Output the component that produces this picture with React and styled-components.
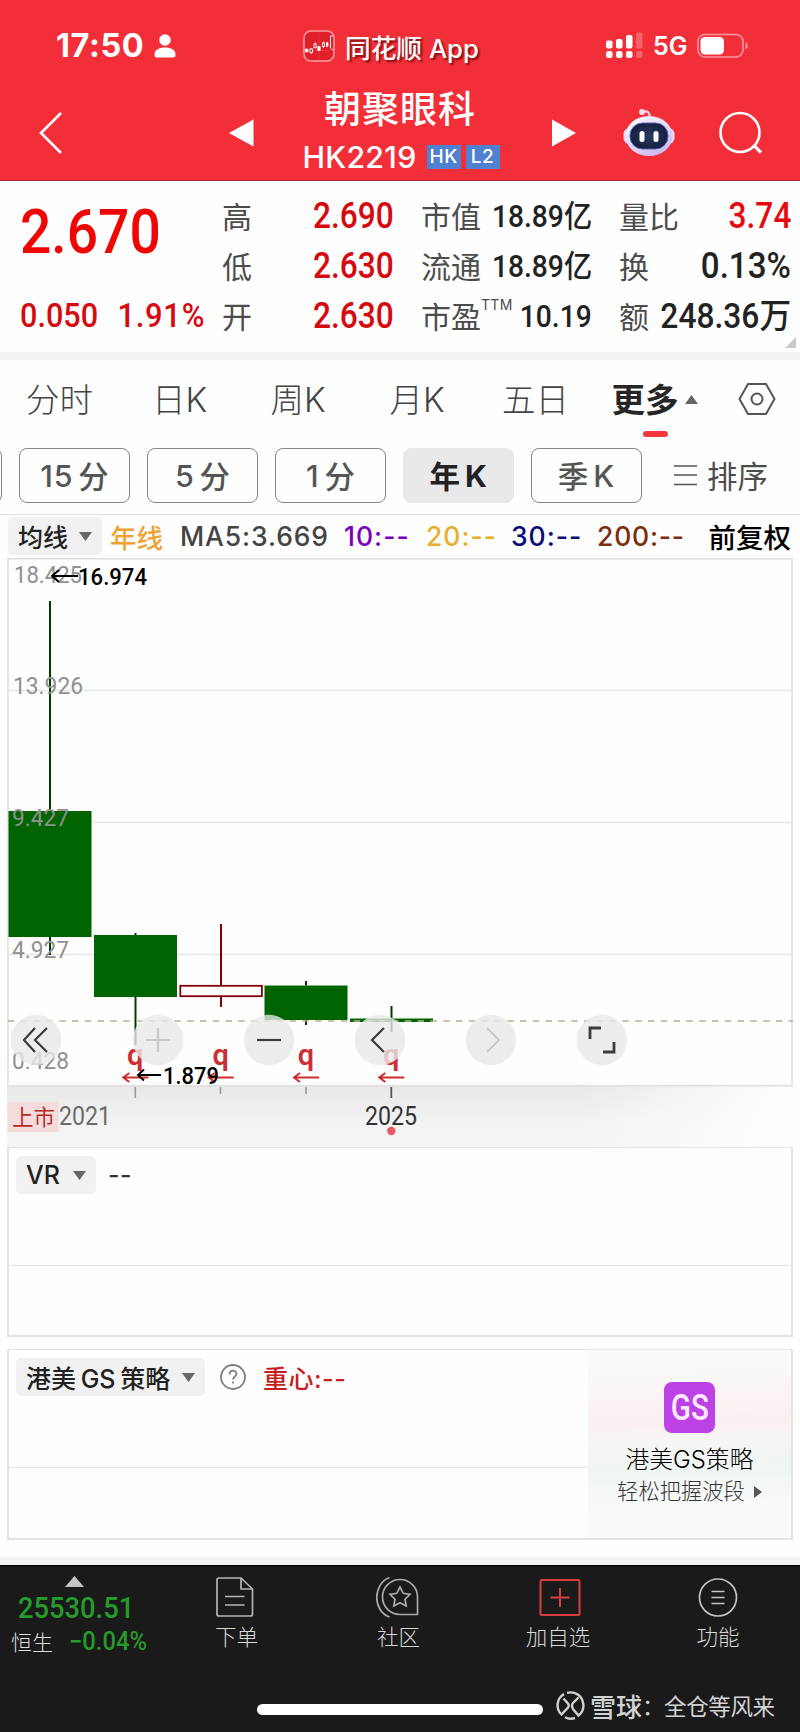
import React from "react";
import { styled, createGlobalStyle } from "styled-components";

const GlobalStyle = createGlobalStyle`
  * {
    box-sizing: border-box;
  }
  body {
    margin: 0;
    background: #fefefe;
    font-family: Inter, "Noto Sans CJK SC", sans-serif;
    color: #222;
    white-space: nowrap;
  }
  svg {
    display: block;
    flex: none;
  }
`;

const Page = styled.div`
  width: 800px;
  height: 1732px;
  overflow: hidden;
  display: flex;
  flex-direction: column;
`;

/* condensed figures used for all prices */
const Num = styled.span`
  display: inline-block;
  font-family: Roboto, "Noto Sans CJK SC", sans-serif;
  font-size: ${(p) => p.$size}px;
  font-weight: ${(p) => p.$weight || 500};
  color: ${(p) => p.$color || "#222"};
  line-height: 1;
  letter-spacing: ${(p) => p.$gap || 0}px;
  transform: scaleX(${(p) => p.$fit || 0.88});
  transform-origin: ${(p) => p.$from || "right"} center;
`;

const Header = styled.header`
  height: 181px;
  flex: none;
  background: #f22f39;
  border-bottom: 1px solid #b3202c;
  color: #fff;
`;

const StatusBar = styled.div`
  height: 92px;
  display: flex;
  align-items: center;
  padding-left: 56px;
`;

const Clock = styled.div`
  width: 98px;
  margin-top: -1px;
  font-size: 32.5px;
  font-weight: 700;
  letter-spacing: 0.6px;
`;

const AppName = styled.div`
  display: flex;
  align-items: center;
  width: 303px;
  margin-left: 127px;
  gap: 10px;
  font-size: 25.7px;
  font-weight: 500;
  text-shadow: 2px 2px 2px rgba(80, 0, 0, 0.7);
`;

const Network = styled.div`
  width: 44px;
  margin-left: 9px;
  font-size: 25px;
  font-weight: 600;
`;

const TitleBar = styled.div`
  height: 88px;
  display: grid;
  grid-template-columns: 229px 26px 296px 26px 46px 52px 43px 44px;
  align-items: center;

  > svg {
    margin-top: -7px;
  }
`;

const StockTitle = styled.div`
  margin-left: -6px;
  margin-top: -1px;
  text-align: center;
`;

const StockName = styled.div`
  font-size: 37px;
  font-weight: 500;
  line-height: 38px;
  letter-spacing: 1px;
  padding-bottom: 5px;
`;

const StockCode = styled.div`
  display: flex;
  justify-content: center;
  align-items: center;
  gap: 5px;
  height: 46px;
  margin-left: 2px;
  font-size: 30.3px;
  font-weight: 500;

  span {
    margin-right: 5px;
    letter-spacing: 0.3px;
  }
`;

const Badge = styled.b`
  width: 34px;
  height: 24px;
  background: #5080d0;
  font-size: 19px;
  font-weight: 500;
  line-height: 24px;
  letter-spacing: 0.5px;
`;

const Quotes = styled.section`
  height: 171px;
  flex: none;
  display: grid;
  grid-template-columns: 175px 172px 171px 172px;
  column-gap: 27px;
  padding: 11px 9px 0 20px;
  position: relative;
`;

const Price = styled.div`
  display: flex;
  flex-direction: column;
  height: 150px;
`;

const Big = styled.div`
  height: 100px;
  padding-top: 9px;
`;

const Change = styled.div`
  height: 50px;
  display: flex;
  align-items: center;
  gap: 2px;
  padding-bottom: 5px;
`;

const QuoteRow = styled.div`
  height: 50px;
  display: flex;
  justify-content: space-between;
  align-items: center;
  font-size: 30px;
  color: #4c4c4c;
  line-height: 46px;

  > ${Num} {
    margin-left: -34px;
    margin-top: -2px;
  }
  sup {
    font-size: 14px;
    line-height: 1;
    vertical-align: 18px;
    letter-spacing: 0.3px;
  }
`;

const Corner = styled.svg`
  position: absolute;
  right: 4px;
  bottom: 4px;
`;

const Band = styled.div`
  height: 8px;
  flex: none;
  background: #f3f3f3;
`;

const Tabs = styled.nav`
  height: 88px;
  flex: none;
  display: grid;
  grid-template-columns: 119px 121px 116px 122px 115px 123px 82px;
`;

const Tab = styled.div`
  height: 80px;
  display: flex;
  justify-content: center;
  align-items: center;
  gap: 6px;
  padding-bottom: 5px;
  font-size: 33.5px;
  font-weight: ${(p) => (p.$active ? 600 : 300)};
  color: ${(p) => (p.$active ? "#262626" : "#444")};
  position: relative;

  > svg {
    margin-top: 3px;
  }
  &::after {
    content: "";
    display: ${(p) => (p.$active ? "block" : "none")};
    position: absolute;
    left: 50px;
    bottom: 3px;
    width: 25px;
    height: 6px;
    border-radius: 3px;
    background: #f3363a;
  }
`;

const Chips = styled.div`
  height: 67px;
  flex: none;
  display: flex;
  gap: 17px;
  margin-left: -109px;
  border-bottom: 1px solid #e3e3e3;
`;

const Chip = styled.div`
  width: 111px;
  height: 55px;
  flex: none;
  display: flex;
  align-items: center;
  justify-content: center;
  gap: 5px;
  padding-bottom: 1px;
  border: 1px solid ${(p) => (p.$active ? "#e9e9e9" : "#858585")};
  border-radius: 8px;
  background: ${(p) => (p.$active ? "#e9e9e9" : "#fefefe")};
  color: ${(p) => (p.$active ? "#222" : "#555")};
  font-size: 30.5px;
  font-weight: ${(p) => (p.$active ? 700 : 500)};

  span {
    letter-spacing: 0.8px;
  }
`;

const Sort = styled.div`
  height: 55px;
  display: flex;
  align-items: center;
  gap: 10px;
  margin-left: 15px;
  padding-bottom: 2px;
  font-size: 30.5px;
  color: #4c4c4c;
`;

const Averages = styled.div`
  height: 43px;
  flex: none;
  display: flex;
  align-items: center;
  padding: 0 9px 1px 8px;
`;

const Select = styled.div`
  display: flex;
  align-items: center;
  justify-content: space-between;
  width: ${(p) => p.$width}px;
  height: 38px;
  padding: 0 10px 0 10px;
  border-radius: 5px;
  background: #f1f1f1;
  font-size: 25px;
  font-weight: 500;
  word-spacing: -2px;
  color: #222;
`;

const AverageList = styled.div`
  display: flex;
  align-items: center;
  margin-left: 8px;
`;

const Average = styled.div`
  width: ${(p) => p.$width}px;
  color: ${(p) => p.$color};
  font-size: 26.5px;
  font-weight: 500;
  letter-spacing: ${(p) => p.$gap || 0}px;
`;

const Adjust = styled.div`
  margin-left: auto;
  font-size: 27.5px;
  color: #000;
  font-weight: 500;
`;

const Chart = styled.svg`
  font-family: Roboto, "Noto Sans CJK SC", sans-serif;
`;

const Panel = styled.section`
  height: ${(p) => p.$height}px;
  flex: none;
  margin: 0 7px ${(p) => p.$below}px 7px;
  border: 2px solid #e4e4e4;
  border-top-width: 1px;
  display: flex;
`;

const PanelBody = styled.div`
  flex: 1;
`;

const PanelTop = styled.div`
  height: 118px;
  border-bottom: 1px solid #e4e4e4;
  display: flex;
  align-items: flex-start;
  padding: 8px 7px;
`;

const PanelValue = styled.div`
  height: 38px;
  display: flex;
  align-items: center;
  margin-left: ${(p) => p.$left}px;
  font-size: 25px;
  font-weight: 500;
  color: ${(p) => p.$color};
  letter-spacing: 0.5px;
`;

const Promo = styled.div`
  width: 203px;
  display: flex;
  flex-direction: column;
  align-items: center;
  padding-top: 32px;
  background: linear-gradient(178deg, #fafafa 8%, #fbeff0 39%, #f8f4f4 46%, #eff5f3 62%, #fafafa 84%);
`;

const PromoLogo = styled.div`
  width: 51px;
  height: 51px;
  border-radius: 8px;
  background: #bd42e5;
  display: flex;
  align-items: center;
  justify-content: center;
`;

const PromoTitle = styled.div`
  margin-top: 10px;
  font-size: 23.8px;
  font-weight: 300;
  line-height: 34px;
  color: #000;
`;

const PromoText = styled.div`
  display: flex;
  align-items: center;
  gap: 9px;
  font-size: 21.3px;
  font-weight: 300;
  line-height: 29px;
  color: #333;
`;

const Bottom = styled.footer`
  height: 167px;
  flex: none;
  background: #1a1a1a;
  border-top: 1px solid #000;
`;

const Nav = styled.div`
  height: 122px;
  display: grid;
  grid-template-columns: 156px 161px 163px 156px 164px;
`;

const Index = styled.div`
  padding: 10px 0 0 11px;

  > svg {
    margin-left: 54px;
  }
`;

const IndexRow = styled.div`
  display: flex;
  align-items: center;
  gap: 16px;
  height: ${(p) => p.$height}px;
  padding-left: ${(p) => p.$left || 0}px;
  font-size: 21px;
  font-weight: 300;
  color: #ddd;
`;

const NavItem = styled.div`
  display: flex;
  flex-direction: column;
  align-items: center;
  gap: 3px;
  padding-top: 10px;
  font-size: 21.5px;
  font-weight: 300;
  line-height: 33px;
  color: #d8d8d8;
`;

const HomeRow = styled.div`
  display: flex;
  align-items: center;
  height: 34px;
  padding-left: 257px;
`;

const HomeBar = styled.div`
  width: 286px;
  height: 11px;
  border-radius: 6px;
  background: #fff;
  margin-top: 8px;
`;

const Watermark = styled.div`
  display: flex;
  align-items: center;
  margin-left: 13px;
  color: #d2d2d2;
  font-size: 22.5px;
  letter-spacing: -0.4px;

  b {
    font-size: 26px;
    font-weight: 500;
    margin-left: 5px;
    letter-spacing: 0;
  }
`;

const Caret = ({ up, w = 13, h = 9, color = "#666" }) => (
  <svg width={w} height={h} viewBox="0 0 13 9" preserveAspectRatio="none">
    <path d={up ? "M0 9L6.5 0L13 9Z" : "M0 0H13L6.5 9Z"} fill={color} />
  </svg>
);

const quotes = [
  [
    { label: "高", value: "2.690", color: "#d5090f" },
    { label: "低", value: "2.630", color: "#d5090f" },
    { label: "开", value: "2.630", color: "#d5090f" },
  ],
  [
    { label: "市值", value: "18.89亿", size: 31, fit: 0.91 },
    { label: "流通", value: "18.89亿", size: 31, fit: 0.91 },
    { label: "市盈", sup: "TTM", value: "10.19", size: 32 },
  ],
  [
    { label: "量比", value: "3.74", color: "#e50a10" },
    { label: "换", value: "0.13%", fit: 0.92 },
    { label: "额", value: "248.36万", size: 34.5, fit: 0.92 },
  ],
];

const averages = [
  { text: "年线", width: 70, color: "#eda233" },
  { text: "MA5:3.669", width: 164, color: "#444", gap: 0.9 },
  { text: "10:--", width: 82, color: "#7a00c0", gap: 1 },
  { text: "20:--", width: 85, color: "#e9ae2b", gap: 1 },
  { text: "30:--", width: 86, color: "#0a0a78", gap: 1 },
  { text: "200:--", width: 100, color: "#7b2d0c", gap: 0.8 },
];

const prices = [
  { text: "18.425", x: 14, y: 583, w: 68 },
  { text: "13.926", x: 13, y: 694, w: 70 },
  { text: "9.427", x: 12, y: 826, w: 57 },
  { text: "4.927", x: 12, y: 958, w: 57 },
  { text: "0.428", x: 12, y: 1069, w: 57 },
];

const candles = [
  { x: 8.5, top: 811, bottom: 937, high: 601, low: 955 },
  { x: 94, top: 935, bottom: 997, high: 933, low: 1045 },
  { x: 179.5, top: 985, bottom: 997, high: 924, low: 1007, rise: true },
  { x: 264.5, top: 985.5, bottom: 1020, high: 981, low: 1025 },
  { x: 350, top: 1018.5, bottom: 1022, high: 1006, low: 1032 },
];

const controls = [
  { x: 36, d: "M-1 -12L-12 0L-1 12M11 -12L-1 0L11 12" },
  { x: 158, d: "M-12 0H12M0 -12V12", off: true },
  { x: 269, d: "M-12 0H12" },
  { x: 380, d: "M4 -12L-8 0L4 12" },
  { x: 491, d: "M-4 -12L8 0L-4 12", off: true },
  { x: 602, d: "M-12 -1V-12H-1M12 2V12H1", thick: true },
];

const KLine = () => (
  <Chart width="800" height="589" viewBox="0 558 800 589">
    <defs>
      <linearGradient id="axisShade" x1="0" y1="0" x2="0" y2="1">
        <stop offset="0" stopColor="#e8e8e8" />
        <stop offset="0.6" stopColor="#f3f3f3" />
        <stop offset="1" stopColor="#f4f4f4" />
      </linearGradient>
      <linearGradient id="axisFade">
        <stop offset="0.45" stopColor="#fefefe" stopOpacity="0" />
        <stop offset="0.97" stopColor="#fefefe" />
      </linearGradient>
    </defs>
    <rect x="7" y="1086" width="786" height="61" fill="url(#axisShade)" />
    <rect x="400" y="1086" width="393" height="61" fill="url(#axisFade)" />
    <path d="M8 690.5H792M8 822.5H792M8 954.5H792" stroke="#e5e5e5" strokeWidth="1.3" />
    <rect x="8" y="558.8" width="784" height="527" fill="none" stroke="#e0e0e0" strokeWidth="1.6" />
    {candles.map((c) => {
      const color = c.rise ? "#820008" : "#006500";
      return (
        <g key={c.x}>
          <path
            d={`M${c.x + 41.5} ${c.high}V${c.top}M${c.x + 41.5} ${c.bottom}V${c.low}`}
            stroke={c.rise ? color : "#003c00"}
            strokeWidth="2"
          />
          <rect
            x={c.rise ? c.x + 0.8 : c.x}
            y={c.rise ? c.top + 0.8 : c.top}
            width={c.rise ? 81.6 : 83}
            height={c.bottom - c.top - (c.rise ? 1.6 : 0)}
            fill={c.rise ? "#fefefe" : color}
            stroke={c.rise ? color : "none"}
            strokeWidth="1.8"
          />
        </g>
      );
    })}
    <path d="M8 1021H793" stroke="#b9ae93" strokeWidth="1.4" strokeDasharray="6.4 6.4" />
    {prices.map((p) => (
      <text key={p.text} x={p.x} y={p.y} textLength={p.w} lengthAdjust="spacingAndGlyphs" fontSize="24" fill="#909090">
        {p.text}
      </text>
    ))}
    {[135.3, 220.7, 306, 391.3].map((x) => (
      <g key={x}>
        <text x={x} y="1065" textAnchor="middle" fontSize="29" fontWeight="600" fill="#cd3034">
          q
        </text>
        <path d={`M${x + 13} 1077.5H${x - 12}M${x - 6} 1073L${x - 12} 1077.5L${x - 6} 1082`} stroke="#cd2c30" strokeWidth="2" fill="none" />
      </g>
    ))}
    {controls.map((b) => (
      <g key={b.x} transform={`translate(${b.x} 1040)`}>
        <circle r="25.3" fill="#e9e9e9" fillOpacity="0.8" />
        <path d={b.d} fill="none" stroke={b.off ? "#c9c9c9" : "#3b3b3b"} strokeWidth={b.thick ? 2.8 : 2.2} />
      </g>
    ))}
    <g fill="none" stroke="#000" strokeWidth="2">
      <path d="M78 576H52M59 570L52 576L59 582" />
      <path d="M161 1075H138M144 1069.5L138 1075L144 1080.5" />
    </g>
    <g fontSize="24.5" fontWeight="500" fill="#000">
      <text x="78" y="585" textLength="69" lengthAdjust="spacingAndGlyphs">16.974</text>
      <text x="163" y="1084" textLength="56" lengthAdjust="spacingAndGlyphs">1.879</text>
    </g>
    <path d="M135.3 1087V1098M220.5 1087V1094M306 1087V1094" stroke="#999" strokeWidth="1.6" />
    <path d="M391.3 1087V1098" stroke="#555" strokeWidth="1.8" />
    <rect x="7.5" y="1102" width="51" height="30" fill="#f5dcdc" />
    <text x="12" y="1125" fontSize="21.5" fill="#b72b2b">上市</text>
    <text x="59" y="1125" textLength="52" lengthAdjust="spacingAndGlyphs" fontSize="25" fill="#6c6c6c">2021</text>
    <text x="365" y="1125" textLength="52" lengthAdjust="spacingAndGlyphs" fontSize="25" fill="#333">2025</text>
    <circle cx="391.3" cy="1131" r="4.2" fill="#e45a60" />
  </Chart>
);

const AppLogo = () => (
  <svg width="32" height="32" viewBox="0 0 32 32">
    <rect x="1" y="1" width="30" height="30" rx="7" fill="#e01f2a" stroke="#ff9a9c" strokeWidth="1.6" />
    <path d="M2 20.5H30M16 2V30" stroke="#ee4a50" strokeWidth="0.5" />
    <path d="M2.500 19h2.500v3h-2.500zM14.800 16.500h2.400v4h-2.400zM23.500 12.500h1.500v4h-1.500z" fill="#fff" stroke="#fff" strokeWidth="0.7" />
    <g fill="none" stroke="#fff" strokeWidth="0.9">
      <rect x="7" y="19" width="2.500" height="3.500" />
      <rect x="11" y="14" width="2.200" height="3.500" />
      <rect x="19.500" y="13" width="2" height="3.500" />
      <path d="M8.200 18V19M8.200 22.500V24M12 12.500V14M12 17.500V18.500M20.500 11.500V13M20.500 16.500V18M30 6H27.500V18L30 20" />
    </g>
  </svg>
);

const Signal = () => (
  <svg width="38" height="28" viewBox="0 0 38 28" fill="#fff">
    <rect x="0" y="8.500" width="6.500" height="8" rx="2" />
    <rect x="10" y="7" width="6.500" height="9.500" rx="2" />
    <rect x="20" y="3" width="6.500" height="13.500" rx="2" />
    <rect x="30" y="0.500" width="6.500" height="16" rx="2" opacity="0.25" />
    <rect x="0" y="19" width="6.500" height="7" rx="2.500" />
    <rect x="10" y="19" width="6.500" height="7" rx="2.500" />
    <rect x="20" y="19" width="6.500" height="7" rx="2.500" />
    <rect x="30" y="19" width="6.500" height="7" rx="2.500" opacity="0.25" />
  </svg>
);

const Battery = () => (
  <svg width="52" height="26" viewBox="0 0 52 26">
    <rect x="1" y="1.500" width="45" height="22.500" rx="7" fill="none" stroke="#fff" strokeOpacity="0.5" strokeWidth="1.6" />
    <rect x="3.500" y="4" width="23.500" height="17.500" rx="4.500" fill="#fff" />
    <path d="M48.500 9V16.500C51.500 15 51.500 10.500 48.500 9Z" fill="#fff" opacity="0.5" />
  </svg>
);

const Robot = () => (
  <svg width="52" height="50" viewBox="0 0 52 50">
    <defs>
      <linearGradient id="shell" x1="0" y1="0" x2="0.6" y2="1">
        <stop offset="0" stopColor="#fff" />
        <stop offset="0.5" stopColor="#e9def9" />
        <stop offset="1" stopColor="#cdbdf0" />
      </linearGradient>
      <radialGradient id="visor">
        <stop offset="0" stopColor="#2b3a60" />
        <stop offset="1" stopColor="#16213f" />
      </radialGradient>
    </defs>
    <path d="M19 4C25 2 27 5 26.500 9" fill="none" stroke="#fbd5dc" strokeWidth="2.2" />
    <circle cx="19" cy="4" r="3" fill="#f7dced" />
    <rect x="0.500" y="20" width="51" height="16" rx="6" fill="#e7dbfa" />
    <ellipse cx="26" cy="28" rx="23.500" ry="20" fill="url(#shell)" />
    <rect x="7" y="15" width="38" height="26" rx="12.500" fill="url(#visor)" stroke="#5d61b3" />
    <rect x="16.500" y="23" width="5" height="11" rx="2.500" fill="#fff" />
    <rect x="30.500" y="23" width="5" height="11" rx="2.500" fill="#fff" />
  </svg>
);

const App = () => {
  return (
    <Page>
      <GlobalStyle />
      <Header>
        <StatusBar>
          <Clock>17:50</Clock>
          <svg width="22" height="24" viewBox="0 0 22 24" fill="#fff">
            <circle cx="11" cy="6" r="5.800" />
            <path d="M0.500 21C0.500 15.500 5 13.500 11 13.500S21.500 15.500 21.500 21Q21.500 23.500 19 23.500H3Q0.500 23.500 0.500 21Z" />
          </svg>
          <AppName>
            <AppLogo />
            同花顺 App
          </AppName>
          <Signal />
          <Network>5G</Network>
          <Battery />
        </StatusBar>
        <TitleBar>
          <svg width="64" height="44" viewBox="0 0 64 44">
            <path d="M61 2L41 22L61 42" fill="none" stroke="#fff" strokeWidth="2.6" />
          </svg>
          <svg width="26" height="28" viewBox="0 0 26 28">
            <path d="M0 14L24.500 0.500V27.500Z" fill="#fff" />
          </svg>
          <StockTitle>
            <StockName>朝聚眼科</StockName>
            <StockCode>
              <span>HK2219</span>
              <Badge>HK</Badge>
              <Badge>L2</Badge>
            </StockCode>
          </StockTitle>
          <svg width="26" height="28" viewBox="0 0 26 28">
            <path d="M25 14L1 0.500V27.500Z" fill="#fff" />
          </svg>
          <span />
          <Robot />
          <span />
          <svg width="44" height="44" viewBox="0 0 44 44" fill="none" stroke="#fff" strokeWidth="2.600">
            <circle cx="22" cy="21.500" r="19.500" />
            <path d="M35.500 34L43 41.500" strokeWidth="3.200" />
          </svg>
        </TitleBar>
      </Header>

      <Quotes>
        <Price>
          <Big>
            <Num $size={62} $fit={0.89} $from="left" $color="#f00505">2.670</Num>
          </Big>
          <Change>
            <Num $size={34} $fit={0.9} $from="left" $color="#d5090f">0.050</Num>
            <Num $size={34} $fit={0.91} $from="left" $color="#d5090f" $gap={0.8}>&nbsp;1.91%</Num>
          </Change>
        </Price>
        {quotes.map((col, i) => (
          <div key={i}>
            {col.map((q) => (
              <QuoteRow key={q.label}>
                <span>
                  {q.label}
                  {q.sup && <sup>{q.sup}</sup>}
                </span>
                <Num $size={q.size || 36} $fit={q.fit} $color={q.color}>{q.value}</Num>
              </QuoteRow>
            ))}
          </div>
        ))}
        <Corner width="11" height="11" viewBox="0 0 11 11">
          <path d="M11 0V11H0Z" fill="#c9c9c9" />
        </Corner>
      </Quotes>
      <Band />

      <Tabs>
        <Tab>分时</Tab>
        <Tab>日K</Tab>
        <Tab>周K</Tab>
        <Tab>月K</Tab>
        <Tab>五日</Tab>
        <Tab $active>
          更多
          <Caret up />
        </Tab>
        <Tab>
          <svg width="38" height="34" viewBox="0 0 38 34" fill="none" stroke="#555" strokeWidth="2">
            <path d="M10 2H28L36.500 17L28 32H10L1.500 17Z" />
            <circle cx="19" cy="17" r="5.500" />
          </svg>
        </Tab>
      </Tabs>
      <Chips>
        <Chip />
        <Chip><span>15</span>分</Chip>
        <Chip><span>5</span>分</Chip>
        <Chip><span>1</span>分</Chip>
        <Chip $active>年<span>K</span></Chip>
        <Chip>季<span>K</span></Chip>
        <Sort>
          <svg width="23" height="22" viewBox="0 0 23 22" stroke="#555" strokeWidth="1.600">
            <path d="M0 2H23M0 11H23M0 20.500H23" />
          </svg>
          排序
        </Sort>
      </Chips>

      <Averages>
        <Select $width={94}>
          均线
          <Caret />
        </Select>
        <AverageList>
          {averages.map((a) => (
            <Average key={a.text} $width={a.width} $color={a.color} $gap={a.gap}>
              {a.text}
            </Average>
          ))}
        </AverageList>
        <Adjust>前复权</Adjust>
      </Averages>
      <KLine />

      <Panel $height={190} $below={12}>
        <PanelBody>
          <PanelTop>
            <Select $width={80}>
              VR
              <Caret />
            </Select>
            <PanelValue $left={12} $color="#333">--</PanelValue>
          </PanelTop>
        </PanelBody>
      </Panel>
      <Panel $height={191} $below={17}>
        <PanelBody>
          <PanelTop>
            <Select $width={189}>
              港美 GS 策略
              <Caret />
            </Select>
            <PanelValue $left={15} $color="#c81e1e">
              <svg width="26" height="26" viewBox="0 0 26 26" fill="none" stroke="#808080" strokeWidth="1.800">
                <circle cx="13" cy="13" r="12" />
                <path d="M9.500 10.500C9.500 5.500 16.500 5.500 16.500 10C16.500 12.500 13 12.500 13 15.500M13 17.500V19.500" />
              </svg>
            </PanelValue>
            <PanelValue $left={17} $color="#c81e1e">重心:--</PanelValue>
          </PanelTop>
        </PanelBody>
        <Promo>
          <PromoLogo>
            <Num $size={37} $fit={0.8} $from="center" $color="#fdeaff">GS</Num>
          </PromoLogo>
          <PromoTitle>港美GS策略</PromoTitle>
          <PromoText>
            轻松把握波段
            <svg width="8" height="12" viewBox="0 0 8 12">
              <path d="M0 0L8 6L0 12Z" fill="#555" />
            </svg>
          </PromoText>
        </Promo>
      </Panel>
      <Band />

      <Bottom>
        <Nav>
          <Index>
            <Caret up w={19} h={11} color="#c4c4c4" />
            <IndexRow $height={42} $left={7}>
              <Num $size={30} $weight={500} $fit={0.91} $from="left" $color="#279a2c">25530.51</Num>
            </IndexRow>
            <IndexRow $height={24}>
              恒生
              <Num $size={25} $weight={500} $fit={0.95} $from="left" $color="#279a2c">−0.04%</Num>
            </IndexRow>
          </Index>
          <NavItem>
            <svg width="42" height="42" viewBox="0 0 42 42" fill="none" stroke="#b5b5b5" strokeWidth="1.700">
              <path d="M3 2H25L36.500 13V38Q36.500 40 34.500 40H3Q1 40 1 38V4Q1 2 3 2ZM25 2V13H36.500M9 20.500H28.500M9 29H28.500" />
            </svg>
            下单
          </NavItem>
          <NavItem>
            <svg width="46" height="42" viewBox="0 0 46 42" fill="none" stroke="#aaa" strokeWidth="1.700">
              <path d="M13.500 1.500C-3.500 8 -3.500 35 13.500 41M24 3.500A17.500 17.500 0 1 0 24 38.500H41.500V21A17.500 17.500 0 0 0 24 3.500Z" />
              <path d="M24 11L27.200 17.300L34 18.300L29 23.200L30.200 30L24 26.700L17.800 30L19 23.200L14 18.300L20.800 17.300Z" />
            </svg>
            社区
          </NavItem>
          <NavItem>
            <svg width="46" height="42" viewBox="0 0 46 42" fill="none" stroke="#d93d40" strokeWidth="2">
              <rect x="5.500" y="4" width="39" height="35" rx="1" />
              <path d="M15.500 21.500H34.500M25 12V31" />
            </svg>
            加自选
          </NavItem>
          <NavItem>
            <svg width="42" height="42" viewBox="0 0 42 42" fill="none" stroke="#c4c4c4" strokeWidth="1.700">
              <circle cx="21" cy="21.500" r="18.500" />
              <path d="M14.500 15.500H27.500M14.500 21.500H27.500M14.500 27.500H27.500" />
            </svg>
            功能
          </NavItem>
        </Nav>
        <HomeRow>
          <HomeBar />
          <Watermark>
            <svg width="29" height="29" viewBox="0 0 29 29" fill="none" stroke="#d2d2d2" strokeWidth="2.400">
              <path d="M8 3A13 13 0 0 0 5.500 23.500L12 16.500Q13.500 14.500 12 12.500L7.500 7.500" />
              <path d="M9 26.300A13 13 0 0 0 19 27M11 1.800A13 13 0 0 1 19 2.200" />
              <path d="M19 2.200A13 13 0 0 1 22.500 24.500L17 18Q15 14.500 17 12L22.500 6.500" />
            </svg>
            <b>雪球</b>：全仓等风来
          </Watermark>
        </HomeRow>
      </Bottom>
    </Page>
  );
};

export default App;
